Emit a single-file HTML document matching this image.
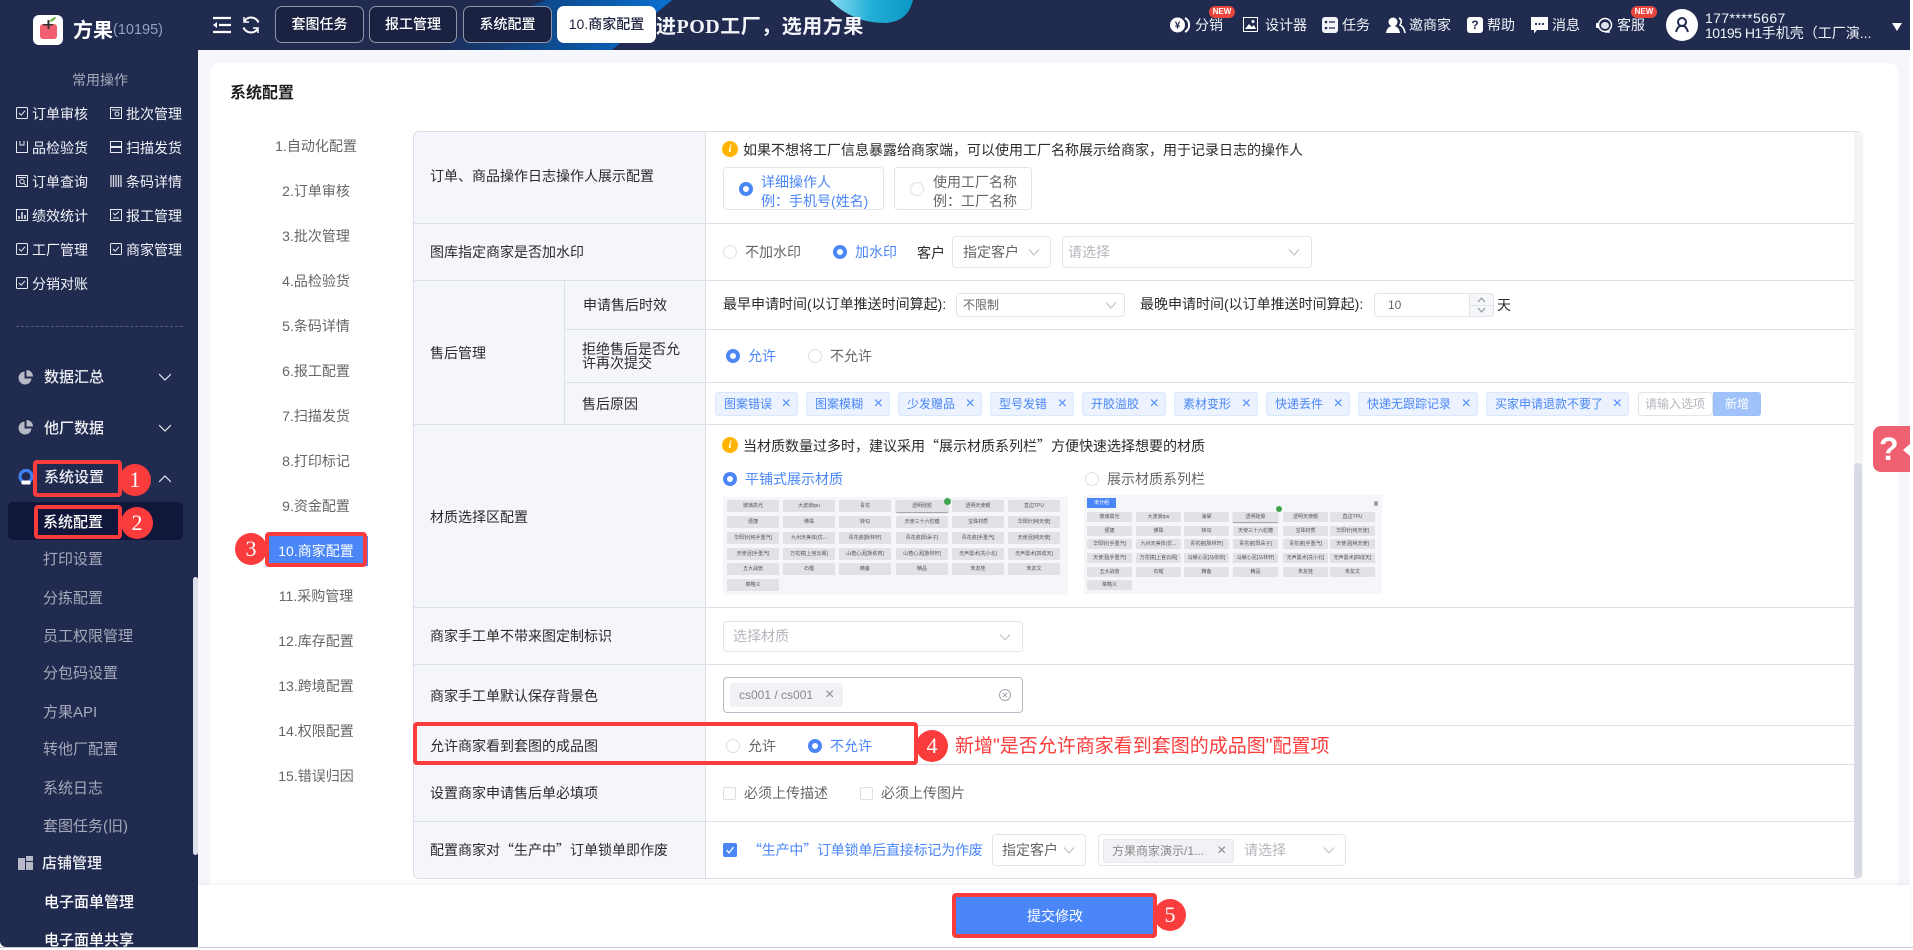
<!DOCTYPE html>
<html lang="zh-CN"><head><meta charset="utf-8"><title>系统配置</title>
<style>
*{box-sizing:border-box}
html,body{margin:0;padding:0;width:1913px;height:950px;overflow:hidden;background:#fff;font-family:"Liberation Sans","Noto Sans CJK SC",sans-serif;font-size:14px;color:#2b2b2b}
.a{position:absolute}
.t{position:absolute;white-space:nowrap;line-height:20px;height:20px}
.w{color:#f1f3f8}
.g{color:#a5a9ba}
.nv{font-size:15px;color:#a6a9b9}
.nb{font-size:15px;color:#eef0f5;font-weight:500}
.rd{position:absolute;width:14px;height:14px;border-radius:50%;border:1px solid #dcdfe6;background:#fff}
.rd.on{border:4.5px solid #4a86f7}
.bl{color:#4a86f7}
.gy{color:#666}
.ph{color:#b5b7bd}
.q{font-family:"Noto Sans CJK SC",sans-serif}
.box{position:absolute;border:1px solid #e1e4ec;border-radius:4px;background:#fff}
.ln{position:absolute;background:#dcdfe6;height:1px}
.tag{position:absolute;top:392px;height:24px;background:#ecf3ff;border:1px solid #dbe7fd;border-radius:3px;color:#4a86f7;font-size:12px;line-height:22px;padding-left:8px;white-space:nowrap}
.tag i{position:absolute;right:6px;top:0;font-style:normal;font-size:16px;font-weight:normal}
.red{position:absolute;border:4px solid #fb3c3c;border-radius:4px;z-index:20}
.cir{position:absolute;width:32px;height:32px;border-radius:50%;background:#fb3c3c;color:#fff;font-family:"Liberation Serif",serif;font-size:22px;line-height:32px;text-align:center;z-index:19}
.tab{position:absolute;top:6px;height:37px;border:1px solid #8f95a8;border-radius:7px;background:#1b2140;color:#fff;font-size:14px;font-weight:500;line-height:35px;text-align:center}
.new{position:absolute;top:6px;width:26px;height:12px;border-radius:6px;background:#e8453c;color:#fff;font-size:8px;font-weight:bold;line-height:12px;text-align:center}
svg.a{overflow:visible}
.im{position:absolute;background:#f5f6fa}
.im span{position:absolute;background:#e0e2e8;color:#555;font-size:5px;text-align:center;white-space:nowrap;overflow:hidden;border-radius:1px}
.c1 span{height:12px;line-height:12px;width:52px}
.c2 span{height:10px;line-height:10px;width:45px}
</style></head>
<body>
<svg width="0" height="0" style="position:absolute"><defs>
<symbol id="chev" viewBox="0 0 12 12"><polyline points="1,3.5 6,9 11,3.5" fill="none" stroke="#b9bcc4" stroke-width="1"/></symbol>
<symbol id="chw" viewBox="0 0 12 12"><polyline points="0,3 6,9 12,3" fill="none" stroke="#e6e8ee" stroke-width="1.2"/></symbol>
<symbol id="chk" viewBox="0 0 12 12"><rect x=".5" y=".5" width="11" height="11" rx="1" fill="none" stroke="#e8eaf0"/><polyline points="3,6 5.2,8.2 9,3.8" fill="none" stroke="#e8eaf0"/></symbol>
<symbol id="pie" viewBox="0 0 15 15"><path d="M6.5 1.5A6.5 6.5 0 1 0 13.5 8.5H6.5Z" fill="#b6b9c6"/><path d="M8.5 0A6.5 6.5 0 0 1 15 6.5H8.5Z" fill="#b6b9c6"/></symbol>
</defs></svg>

<!-- page background -->
<div class="a" style="left:198px;top:50px;width:1712px;height:897px;background:#f5f7fc"></div>
<div class="a" style="left:210px;top:63px;width:1688px;height:840px;background:#fff;border-radius:10px 10px 0 0"></div>

<!-- top bar -->
<div class="a" style="left:0;top:0;width:1910px;height:50px;background:#212b4f;overflow:hidden">
<svg class="a" style="left:0;top:0" width="1910" height="50"><defs>
<linearGradient id="sw" x1="0" y1="0" x2="1" y2="0"><stop offset="0" stop-color="#1c2c58"/><stop offset=".55" stop-color="#0c4f96"/><stop offset="1" stop-color="#0b70d2"/></linearGradient>
<linearGradient id="bb" x1="0" y1="0" x2="1" y2="0"><stop offset="0" stop-color="#8adcf2"/><stop offset=".5" stop-color="#22aed6"/><stop offset="1" stop-color="#0c97c4"/></linearGradient>
</defs>
<polygon points="435,50 545,0 672,0 612,50" fill="url(#sw)"/>
<path d="M830 0Q852 23 885 23Q908 22 913 0Z" fill="url(#bb)"/>
</svg>
</div>
<div class="a" style="left:33px;top:15px;width:30px;height:30px;background:#fff;border-radius:6px"></div>
<svg class="a" style="left:33px;top:15px" width="30" height="30"><rect x="7" y="9" width="17" height="15" rx="3" fill="#f15f70"/><rect x="14.500" y="5" width="2" height="9" fill="#333"/><rect x="10" y="9" width="10" height="1.500" fill="#333"/><path d="M17 6Q19 2 23 2Q22 6 17 7Z" fill="#6fb54b"/></svg>
<div class="t" style="left:73px;top:21px;font-size:20px;font-weight:bold;color:#fff">方果</div>
<div class="t" style="left:113px;top:20px;font-size:14.5px;color:#8ea4c4">(10195)</div>
<svg class="a" style="left:213px;top:17px" width="18" height="16"><path d="M0 1H18M6 8H18M0 15H18" stroke="#fff" stroke-width="2.200"/><path d="M0 8L4 5V11Z" fill="#fff"/></svg>
<svg class="a" style="left:242px;top:16px" width="18" height="18" fill="none" stroke="#fff" stroke-width="2"><path d="M16.500 6.500A8 8 0 0 0 2.500 5"/><path d="M1.500 11.500A8 8 0 0 0 15.500 13"/><path d="M2 1V6H7M16 17V12H11" stroke-width="1.500"/></svg>
<div class="tab" style="left:275px;width:89px">套图任务</div>
<div class="tab" style="left:369px;width:88px">报工管理</div>
<div class="tab" style="left:463px;width:89px">系统配置</div>
<div class="tab" style="left:557px;width:99px;background:#fff;border-color:#fff;color:#1f2540">10.商家配置</div>
<div class="t" style="left:656px;top:17px;font-family:'Liberation Serif','Noto Sans CJK SC',sans-serif;font-size:20px;font-weight:bold;color:#f3f4f8;letter-spacing:.5px;width:212px;overflow:hidden">进POD工厂，选用方果</div>

<!-- top right -->
<svg class="a" style="left:1170px;top:17px" width="22" height="16"><circle cx="7.500" cy="8" r="7.500" fill="#fff"/><path d="M15 1A8 8 0 0 1 15 15" stroke="#fff" stroke-width="2" fill="none"/><text x="7.500" y="11.500" font-size="10" font-weight="bold" text-anchor="middle" fill="#212b4f">¥</text></svg>
<div class="t w" style="left:1195px;top:15px">分销</div><div class="new" style="left:1209px">NEW</div>
<svg class="a" style="left:1243px;top:17px" width="15" height="15"><rect x=".5" y=".5" width="14" height="14" fill="#212b4f" stroke="#fff"/><path d="M2 12L6 7L9 10L11 8L13 12Z" fill="#fff"/><circle cx="10" cy="4.500" r="1.500" fill="#fff"/></svg>
<div class="t w" style="left:1265px;top:15px">设计器</div>
<svg class="a" style="left:1322px;top:17px" width="16" height="16"><rect width="16" height="16" rx="3" fill="#f1f3f8"/><path d="M7 5H13M7 11H13" stroke="#212b4f" stroke-width="1.300"/><circle cx="4" cy="5" r="1.300" fill="#212b4f"/><circle cx="4" cy="11" r="1.300" fill="#212b4f"/></svg>
<div class="t w" style="left:1342px;top:15px">任务</div>
<svg class="a" style="left:1386px;top:17px" width="20" height="16"><circle cx="7" cy="5" r="4.500" fill="#fff"/><path d="M0 16Q1 9 7 9Q13 9 14 16Z" fill="#fff"/><path d="M13 1Q17 3 14 8Q18 10 19 16" fill="none" stroke="#fff" stroke-width="1.600"/></svg>
<div class="t w" style="left:1409px;top:15px">邀商家</div>
<div class="a" style="left:1467px;top:17px;width:16px;height:16px;background:#fff;border-radius:3px;color:#212b4f;font-weight:bold;font-size:12px;line-height:16px;text-align:center">?</div>
<div class="t w" style="left:1487px;top:15px">帮助</div>
<svg class="a" style="left:1531px;top:17px" width="17" height="17"><path d="M0 0H17V13H6L3 16.500V13H0Z" fill="#fff"/><circle cx="5" cy="7" r="1.100" fill="#212b4f"/><circle cx="8.500" cy="7" r="1.100" fill="#212b4f"/><circle cx="12" cy="7" r="1.100" fill="#212b4f"/></svg>
<div class="t w" style="left:1552px;top:15px">消息</div>
<svg class="a" style="left:1596px;top:17px" width="17" height="16" fill="none"><circle cx="9" cy="8" r="6.500" stroke="#fff" stroke-width="1.500"/><ellipse cx="9" cy="8.500" rx="4" ry="3.500" fill="#dfe2ea"/><rect x="0" y="6" width="3" height="5" rx="1" fill="#fff"/><path d="M9 15H14" stroke="#fff" stroke-width="1.500"/></svg>
<div class="t w" style="left:1617px;top:15px">客服</div><div class="new" style="left:1631px">NEW</div>
<div class="a" style="left:1666px;top:9px;width:32px;height:32px;border-radius:50%;background:#fff"></div>
<svg class="a" style="left:1666px;top:9px" width="32" height="32" fill="none" stroke="#212b4f" stroke-width="2"><circle cx="16" cy="13" r="4"/><path d="M10 23Q12 16 16 17Q20 16 22 23"/></svg>
<div class="t w" style="left:1705px;top:8px;font-size:14px;letter-spacing:.4px">177****5667</div>
<div class="t w" style="left:1705px;top:23px;font-size:14px"><span style="letter-spacing:-.5px">10195 H1</span>手机壳（工厂演...</div>
<div class="a" style="left:1892px;top:23px;width:0;height:0;border-left:5px solid transparent;border-right:5px solid transparent;border-top:8px solid #fff"></div>

<!-- sidebar -->
<div class="a" style="left:0;top:50px;width:198px;height:897px;background:#212b4f;border-radius:0 0 0 6px"></div>
<div class="t g" style="left:72px;top:70px">常用操作</div>

<svg class="a" style="left:16px;top:107px" width="12" height="12"><use href="#chk"/></svg><div class="t w" style="left:32px;top:104px">订单审核</div>
<svg class="a" style="left:110px;top:107px" width="12" height="12" fill="none" stroke="#e8eaf0"><rect x=".5" y=".5" width="11" height="11"/><path d="M2 3H10"/><circle cx="7" cy="7" r="2"/></svg><div class="t w" style="left:126px;top:104px">批次管理</div>
<svg class="a" style="left:16px;top:141px" width="12" height="12" fill="none" stroke="#e8eaf0"><path d="M.5 0V11.500H11.500V0M4 0V4H8V0"/></svg><div class="t w" style="left:32px;top:138px">品检验货</div>
<svg class="a" style="left:110px;top:141px" width="12" height="12" fill="none" stroke="#e8eaf0"><path d="M.5 .5H11.500V11.500H.5Z"/><path d="M0 6H12" stroke-width="2"/></svg><div class="t w" style="left:126px;top:138px">扫描发货</div>
<svg class="a" style="left:16px;top:175px" width="12" height="12" fill="none" stroke="#e8eaf0"><rect x=".5" y=".5" width="11" height="11"/><circle cx="6" cy="6.500" r="2.200"/><path d="M8 8.500L10 10.500M2 2.500H10"/></svg><div class="t w" style="left:32px;top:172px">订单查询</div>
<svg class="a" style="left:110px;top:175px" width="12" height="12" stroke="#d8dae2"><path d="M1 0V12M3.500 0V12M6 0V12M8.500 0V12M11 0V12" stroke-width="1.300"/></svg><div class="t w" style="left:126px;top:172px">条码详情</div>
<svg class="a" style="left:16px;top:209px" width="12" height="12" fill="none" stroke="#e8eaf0"><rect x=".5" y=".5" width="11" height="11"/><path d="M3 10V7M6 10V3M9 10V6" stroke-width="1.500"/></svg><div class="t w" style="left:32px;top:206px">绩效统计</div>
<svg class="a" style="left:110px;top:209px" width="12" height="12" fill="none" stroke="#e8eaf0"><rect x=".5" y=".5" width="11" height="11"/><path d="M3 4L5 6L9 2.500M3 9H9"/></svg><div class="t w" style="left:126px;top:206px">报工管理</div>
<svg class="a" style="left:16px;top:243px" width="12" height="12"><use href="#chk"/></svg><div class="t w" style="left:32px;top:240px">工厂管理</div>
<svg class="a" style="left:110px;top:243px" width="12" height="12"><use href="#chk"/></svg><div class="t w" style="left:126px;top:240px">商家管理</div>
<svg class="a" style="left:16px;top:277px" width="12" height="12"><use href="#chk"/></svg><div class="t w" style="left:32px;top:274px">分销对账</div>
<div class="a" style="left:16px;top:326px;width:167px;border-top:1px dashed #565e7c"></div>

<svg class="a" style="left:18px;top:370px" width="15" height="15"><use href="#pie"/></svg><div class="t nb" style="left:44px;top:368px">数据汇总</div>
<svg class="a" style="left:159px;top:371px" width="12" height="12"><use href="#chw"/></svg>
<svg class="a" style="left:18px;top:420px" width="15" height="15"><use href="#pie"/></svg><div class="t nb" style="left:44px;top:419px">他厂数据</div>
<svg class="a" style="left:159px;top:422px" width="12" height="12"><use href="#chw"/></svg>
<svg class="a" style="left:18px;top:469px" width="16" height="16" fill="none"><circle cx="8" cy="7.500" r="6" stroke="#3f80f0" stroke-width="3.200"/><rect x="3.500" y="11.500" width="9" height="4" rx="1" fill="#fff"/></svg>
<div class="t nb" style="left:44px;top:468px">系统设置</div>
<svg class="a" style="left:159px;top:473px;transform:rotate(180deg)" width="12" height="12"><use href="#chw"/></svg>
<div class="a" style="left:8px;top:502px;width:175px;height:38px;background:#11173a;border-radius:5px"></div>
<div class="t nb" style="left:43px;top:513px;color:#fff">系统配置</div>
<div class="t nv" style="left:43px;top:550px">打印设置</div>
<div class="t nv" style="left:43px;top:589px">分拣配置</div>
<div class="t nv" style="left:43px;top:627px">员工权限管理</div>
<div class="t nv" style="left:43px;top:664px">分包码设置</div>
<div class="t nv" style="left:43px;top:703px">方果API</div>
<div class="t nv" style="left:43px;top:740px">转他厂配置</div>
<div class="t nv" style="left:43px;top:779px">系统日志</div>
<div class="t nv" style="left:43px;top:817px">套图任务(旧)</div>
<svg class="a" style="left:18px;top:856px" width="15" height="14" fill="#b6b9c6"><rect y="2" width="7" height="12"/><rect x="8" y="0" width="7" height="5"/><rect x="8" y="6" width="7" height="8"/></svg>
<div class="t nb" style="left:42px;top:854px">店铺管理</div>
<div class="t nb" style="left:44px;top:893px;color:#fff">电子面单管理</div>
<div class="a" style="left:0;top:931px;width:198px;height:16px;overflow:hidden"><div class="t nb" style="left:44px;top:0;color:#fff">电子面单共享</div></div>
<div class="a" style="left:193px;top:577px;width:5px;height:278px;background:#dfe1ea;border-radius:3px"></div>

<!-- content -->
<div class="t" style="left:230px;top:84px;font-size:16px;font-weight:bold;color:#1f1f1f">系统配置</div>

<!-- config nav -->
<div style="position:absolute;left:266px;top:0;width:100px;text-align:center;color:#666">
<div class="t" style="left:0;width:100px;top:136px">1.自动化配置</div>
<div class="t" style="left:0;width:100px;top:181px">2.订单审核</div>
<div class="t" style="left:0;width:100px;top:226px">3.批次管理</div>
<div class="t" style="left:0;width:100px;top:271px">4.品检验货</div>
<div class="t" style="left:0;width:100px;top:316px">5.条码详情</div>
<div class="t" style="left:0;width:100px;top:361px">6.报工配置</div>
<div class="t" style="left:0;width:100px;top:406px">7.扫描发货</div>
<div class="t" style="left:0;width:100px;top:451px">8.打印标记</div>
<div class="t" style="left:0;width:100px;top:496px">9.资金配置</div>
<div class="a" style="left:2px;top:536px;width:100px;height:30px;background:#4a86f7"></div>
<div class="t" style="left:0;width:100px;top:541px;color:#fff">10.商家配置</div>
<div class="t" style="left:0;width:100px;top:586px">11.采购管理</div>
<div class="t" style="left:0;width:100px;top:631px">12.库存配置</div>
<div class="t" style="left:0;width:100px;top:676px">13.跨境配置</div>
<div class="t" style="left:0;width:100px;top:721px">14.权限配置</div>
<div class="t" style="left:0;width:100px;top:766px">15.错误归因</div>
</div>

<!-- table frame -->
<div class="a" style="left:413px;top:131px;width:292px;height:747px;background:#f5f6fb;border-radius:6px 0 0 6px"></div>
<div class="a" style="left:413px;top:131px;width:1450px;height:748px;border:1px solid #dcdfe6;border-radius:6px"></div>
<div class="a" style="left:1854px;top:132px;width:9px;height:746px;background:#f4f4f5"></div>
<div class="a" style="left:1854px;top:463px;width:8px;height:415px;background:#d8dbe3;border-radius:4px"></div>
<div class="ln" style="left:413px;width:1441px;top:223px"></div>
<div class="ln" style="left:413px;width:1441px;top:280px"></div>
<div class="ln" style="left:564px;width:1290px;top:329px"></div>
<div class="ln" style="left:564px;width:1290px;top:382px"></div>
<div class="ln" style="left:413px;width:1441px;top:424px"></div>
<div class="ln" style="left:413px;width:1441px;top:607px"></div>
<div class="ln" style="left:413px;width:1441px;top:664px"></div>
<div class="ln" style="left:413px;width:1441px;top:725px"></div>
<div class="ln" style="left:413px;width:1441px;top:764px"></div>
<div class="ln" style="left:413px;width:1441px;top:821px"></div>
<div class="a" style="left:705px;top:131px;width:1px;height:747px;background:#dcdfe6"></div>
<div class="a" style="left:564px;top:280px;width:1px;height:144px;background:#dcdfe6"></div>

<!-- labels -->
<div class="t" style="left:430px;top:166px">订单、商品操作日志操作人展示配置</div>
<div class="t" style="left:430px;top:242px">图库指定商家是否加水印</div>
<div class="t" style="left:430px;top:343px">售后管理</div>
<div class="t" style="left:583px;top:295px">申请售后时效</div>
<div class="a" style="left:582px;top:342px;width:110px;line-height:14px">拒绝售后是否允<br>许再次提交</div>
<div class="t" style="left:582px;top:394px">售后原因</div>
<div class="t" style="left:430px;top:507px">材质选择区配置</div>
<div class="t" style="left:430px;top:626px">商家手工单不带来图定制标识</div>
<div class="t" style="left:430px;top:686px">商家手工单默认保存背景色</div>
<div class="t" style="left:430px;top:736px">允许商家看到套图的成品图</div>
<div class="t" style="left:430px;top:783px">设置商家申请售后单必填项</div>
<div class="t q" style="left:430px;top:840px">配置商家对“生产中”订单锁单即作废</div>

<!-- row 1 -->
<div class="a" style="left:722px;top:141px;width:16px;height:16px;border-radius:50%;background:#ffb400;color:#fff;font:italic bold 11px/16px 'Liberation Serif',serif;text-align:center">i</div>
<div class="t" style="left:743px;top:140px">如果不想将工厂信息暴露给商家端，可以使用工厂名称展示给商家，用于记录日志的操作人</div>
<div class="box" style="left:723px;top:167px;width:161px;height:43px"></div>
<div class="rd on" style="left:739px;top:182px"></div>
<div class="t bl" style="left:761px;top:172px">详细操作人</div>
<div class="t bl" style="left:761px;top:191px">例：手机号(姓名)</div>
<div class="box" style="left:894px;top:167px;width:138px;height:43px"></div>
<div class="rd" style="left:910px;top:182px"></div>
<div class="t gy" style="left:933px;top:172px">使用工厂名称</div>
<div class="t gy" style="left:933px;top:191px">例：工厂名称</div>

<!-- row 2 -->
<div class="rd" style="left:723px;top:245px"></div><div class="t gy" style="left:745px;top:242px">不加水印</div>
<div class="rd on" style="left:833px;top:245px"></div><div class="t bl" style="left:855px;top:242px">加水印</div>
<div class="t" style="left:917px;top:243px">客户</div>
<div class="box" style="left:952px;top:236px;width:99px;height:32px"></div><div class="t gy" style="left:963px;top:242px">指定客户</div>
<svg class="a" style="left:1028px;top:246px" width="12" height="12"><use href="#chev"/></svg>
<div class="box" style="left:1062px;top:236px;width:250px;height:32px"></div><div class="t ph" style="left:1068px;top:242px">请选择</div>
<svg class="a" style="left:1288px;top:246px" width="12" height="12"><use href="#chev"/></svg>

<!-- row 3a -->
<div class="t" style="left:723px;top:294px">最早申请时间(以订单推送时间算起):</div>
<div class="box" style="left:956px;top:293px;width:169px;height:24px"></div><div class="t gy" style="left:963px;top:295px;font-size:12px">不限制</div>
<svg class="a" style="left:1105px;top:299px" width="12" height="12"><use href="#chev"/></svg>
<div class="t" style="left:1140px;top:294px">最晚申请时间(以订单推送时间算起):</div>
<div class="box" style="left:1374px;top:293px;width:120px;height:24px"></div><div class="t gy" style="left:1388px;top:295px;font-size:12px">10</div>
<div class="a" style="left:1469px;top:293px;width:25px;height:24px;background:#f5f6f8;border:1px solid #e1e4ec;border-radius:0 4px 4px 0"></div>
<div class="a" style="left:1469px;top:305px;width:25px;height:1px;background:#e1e4ec"></div>
<svg class="a" style="left:1476px;top:295px" width="11" height="20" fill="none" stroke="#8a8e98"><path d="M2 7L5.500 3L9 7M2 13L5.500 17L9 13"/></svg>
<div class="t" style="left:1497px;top:295px">天</div>

<!-- row 3b -->
<div class="rd on" style="left:726px;top:349px"></div><div class="t bl" style="left:748px;top:346px">允许</div>
<div class="rd" style="left:808px;top:349px"></div><div class="t gy" style="left:830px;top:346px">不允许</div>

<!-- row 3c tags -->
<div class="tag" style="left:715px;width:83px">图案错误<i>×</i></div>
<div class="tag" style="left:806px;width:84px">图案模糊<i>×</i></div>
<div class="tag" style="left:898px;width:84px">少发赠品<i>×</i></div>
<div class="tag" style="left:990px;width:84px">型号发错<i>×</i></div>
<div class="tag" style="left:1082px;width:84px">开胶溢胶<i>×</i></div>
<div class="tag" style="left:1174px;width:84px">素材变形<i>×</i></div>
<div class="tag" style="left:1266px;width:84px">快递丢件<i>×</i></div>
<div class="tag" style="left:1358px;width:120px">快递无跟踪记录<i>×</i></div>
<div class="tag" style="left:1486px;width:143px">买家申请退款不要了<i>×</i></div>
<div class="box" style="left:1638px;top:392px;width:75px;height:24px"></div><div class="t ph" style="left:1645px;top:394px;font-size:12px">请输入选项</div>
<div class="a" style="left:1713px;top:392px;width:48px;height:24px;background:#a0c2fb;border-radius:0 3px 3px 0;color:#fff;font-size:12px;line-height:24px;text-align:center">新增</div>

<!-- row 4 -->
<div class="a" style="left:722px;top:437px;width:16px;height:16px;border-radius:50%;background:#ffb400;color:#fff;font:italic bold 11px/16px 'Liberation Serif',serif;text-align:center">i</div>
<div class="t q" style="left:743px;top:436px">当材质数量过多时，建议采用“展示材质系列栏”方便快速选择想要的材质</div>
<div class="rd on" style="left:723px;top:472px"></div><div class="t bl" style="left:745px;top:469px">平铺式展示材质</div>
<div class="rd" style="left:1085px;top:472px"></div><div class="t gy" style="left:1107px;top:469px">展示材质系列栏</div>

<div class="im c1" style="left:723px;top:497px;width:345px;height:98px">
<span style="left:4px;top:3px">玻璃高光</span><span style="left:60px;top:3px">大波浪tpu</span><span style="left:116px;top:3px">青花</span><span style="left:173px;top:3px;box-shadow:0 1px 1px #999">透明硅胶</span><span style="left:229px;top:3px">透明天使眼</span><span style="left:285px;top:3px">直边TPU</span>
<span style="left:4px;top:19px">便捷</span><span style="left:60px;top:19px">佛珠</span><span style="left:116px;top:19px">转勾</span><span style="left:173px;top:19px">天使三十六粒糖</span><span style="left:229px;top:19px">宝珠材质</span><span style="left:285px;top:19px">华阳针[纯天使]</span>
<span style="left:4px;top:35px">华阳针[纯手重汽]</span><span style="left:60px;top:35px">九州天美体(优...</span><span style="left:116px;top:35px">青花瓷[脉林轩]</span><span style="left:173px;top:35px">青花瓷[阳朵子]</span><span style="left:229px;top:35px">青花瓷[手重汽]</span><span style="left:285px;top:35px">天使泪[纯天使]</span>
<span style="left:4px;top:51px">天使泪[手重汽]</span><span style="left:60px;top:51px">万花镜[上官云阁]</span><span style="left:116px;top:51px">山楂心泥[脉依肉]</span><span style="left:173px;top:51px">山楂心泥[脉林轩]</span><span style="left:229px;top:51px">无声曼术[冼小北]</span><span style="left:285px;top:51px">无声曼术[四成天]</span>
<span style="left:4px;top:66px">五大战兽</span><span style="left:60px;top:66px">石榴</span><span style="left:116px;top:66px">精备</span><span style="left:173px;top:66px">精品</span><span style="left:229px;top:66px">朱友桂</span><span style="left:285px;top:66px">朱友文</span>
<span style="left:4px;top:82px">菜略义</span>
<div class="a" style="left:221px;top:1px;width:7px;height:7px;border-radius:50%;background:#3fa34d"></div>
</div>

<div class="im c2" style="left:1084px;top:495px;width:298px;height:99px">
<div class="a" style="left:3px;top:3px;width:29px;height:10px;background:#4a86f7;color:#fff;font-size:5px;line-height:10px;text-align:center">未分组</div>
<div class="a" style="left:290px;top:6px;width:4px;height:5px;background:#9a9ca3;border-radius:2px"></div>
<span style="left:3px;top:17px">玻璃高光</span><span style="left:52px;top:17px">大波浪tpu</span><span style="left:100px;top:17px">海棠</span><span style="left:149px;top:17px;box-shadow:0 1px 1px #999">透明硅胶</span><span style="left:199px;top:17px">透明天使眼</span><span style="left:246px;top:17px">直边TPU</span>
<span style="left:3px;top:31px">便捷</span><span style="left:52px;top:31px">佛珠</span><span style="left:100px;top:31px">转勾</span><span style="left:149px;top:31px">天使三十六粒糖</span><span style="left:199px;top:31px">宝珠材质</span><span style="left:246px;top:31px">华阳针[纯天使]</span>
<span style="left:3px;top:44px">华阳针[手重汽]</span><span style="left:52px;top:44px">九州天美体(优...</span><span style="left:100px;top:44px">青花瓷[脉林轩]</span><span style="left:149px;top:44px">青花瓷[阳朵子]</span><span style="left:199px;top:44px">青花瓷[手重汽]</span><span style="left:246px;top:44px">天使泪[纯天使]</span>
<span style="left:3px;top:58px">天使泪[手重汽]</span><span style="left:52px;top:58px">万花镜[上官云阁]</span><span style="left:100px;top:58px">马赫心泥[马依依]</span><span style="left:149px;top:58px">马赫心泥[马林轩]</span><span style="left:199px;top:58px">无声曼术[冼小北]</span><span style="left:246px;top:58px">无声曼术[四成天]</span>
<span style="left:3px;top:72px">五大战兽</span><span style="left:52px;top:72px">石榴</span><span style="left:100px;top:72px">精备</span><span style="left:149px;top:72px">精品</span><span style="left:199px;top:72px">朱友桂</span><span style="left:246px;top:72px">朱友文</span>
<span style="left:3px;top:85px">菜略义</span>
<div class="a" style="left:192px;top:11px;width:6px;height:6px;border-radius:50%;background:#3fa34d"></div>
</div>

<!-- row 5 -->
<div class="box" style="left:723px;top:621px;width:300px;height:31px"></div><div class="t ph" style="left:733px;top:626px">选择材质</div>
<svg class="a" style="left:999px;top:631px" width="12" height="12"><use href="#chev"/></svg>

<!-- row 6 -->
<div class="box" style="left:723px;top:677px;width:300px;height:36px;border-color:#b8bcc8"></div>
<div class="a" style="left:730px;top:683px;width:113px;height:24px;background:#f0f2f5;border-radius:3px;font-size:12px;line-height:24px;padding-left:9px;color:#888">cs001 / cs001<span style="position:absolute;left:95px;font-size:16px">×</span></div>
<svg class="a" style="left:999px;top:689px" width="12" height="12" fill="none" stroke="#a0a3ab"><circle cx="6" cy="6" r="5.500"/><path d="M4 4L8 8M8 4L4 8"/></svg>

<!-- row 7 -->
<div class="rd" style="left:726px;top:739px"></div><div class="t gy" style="left:748px;top:736px">允许</div>
<div class="rd on" style="left:808px;top:739px"></div><div class="t bl" style="left:830px;top:736px">不允许</div>

<!-- row 8 -->
<div class="a" style="left:723px;top:787px;width:13px;height:13px;border:1px solid #dcdfe6;border-radius:2px;background:#fff"></div><div class="t gy" style="left:744px;top:783px">必须上传描述</div>
<div class="a" style="left:860px;top:787px;width:13px;height:13px;border:1px solid #dcdfe6;border-radius:2px;background:#fff"></div><div class="t gy" style="left:881px;top:783px">必须上传图片</div>

<!-- row 9 -->
<svg class="a" style="left:723px;top:843px" width="14" height="14"><rect width="14" height="14" rx="2" fill="#4a86f7"/><polyline points="3.500,7 6,10 10.500,4" fill="none" stroke="#fff" stroke-width="1.300"/></svg>
<div class="t bl q" style="left:748px;top:840px;letter-spacing:-.2px">“生产中”订单锁单后直接标记为作废</div>
<div class="box" style="left:992px;top:834px;width:94px;height:32px"></div><div class="t gy" style="left:1002px;top:840px">指定客户</div>
<svg class="a" style="left:1063px;top:844px" width="12" height="12"><use href="#chev"/></svg>
<div class="box" style="left:1098px;top:834px;width:248px;height:32px"></div>
<div class="a" style="left:1103px;top:839px;width:131px;height:24px;background:#f0f2f5;border:1px solid #e4e6eb;border-radius:3px;font-size:12px;line-height:22px;padding-left:8px;color:#888;white-space:nowrap">方果商家演示/1...<span style="position:absolute;left:113px;font-size:16px">×</span></div>
<div class="t ph" style="left:1244px;top:840px">请选择</div>
<svg class="a" style="left:1323px;top:844px" width="12" height="12"><use href="#chev"/></svg>

<!-- float help -->
<div class="a" style="left:1873px;top:426px;width:37px;height:46px;background:#ef6070;border-radius:8px 0 0 8px"></div>
<div class="a" style="left:1879px;top:428px;color:#fff;font-size:32px;font-weight:bold;line-height:42px">?</div>
<div class="a" style="left:1903px;top:444px;width:0;height:0;border-top:6px solid transparent;border-bottom:6px solid transparent;border-right:7px solid #fff"></div>

<!-- footer -->
<div class="a" style="left:198px;top:885px;width:1712px;height:62px;background:#fff;box-shadow:0 -2px 6px rgba(0,0,0,.05)"></div>
<div class="a" style="left:0;top:947px;width:1913px;height:1px;background:#c9ccd2"></div>
<div class="a" style="left:955px;top:897px;width:200px;height:38px;background:#4a86f7;color:#fff;line-height:38px;text-align:center">提交修改</div>

<!-- annotations -->
<div class="red" style="left:33px;top:460px;width:89px;height:37px"></div>
<div class="cir" style="left:119px;top:464px">1</div>
<div class="red" style="left:34px;top:505px;width:88px;height:34px"></div>
<div class="cir" style="left:121px;top:507px">2</div>
<div class="red" style="left:265px;top:532px;width:102px;height:35px"></div>
<div class="cir" style="left:235px;top:533px">3</div>
<div class="red" style="left:413px;top:722px;width:505px;height:43px"></div>
<div class="cir" style="left:916px;top:730px">4</div>
<div class="t" style="left:955px;top:737px;font-size:19px;color:#fb3c3c">新增"是否允许商家看到套图的成品图"配置项</div>
<div class="red" style="left:952px;top:893px;width:205px;height:45px"></div>
<div class="cir" style="left:1154px;top:899px">5</div>
</body></html>
